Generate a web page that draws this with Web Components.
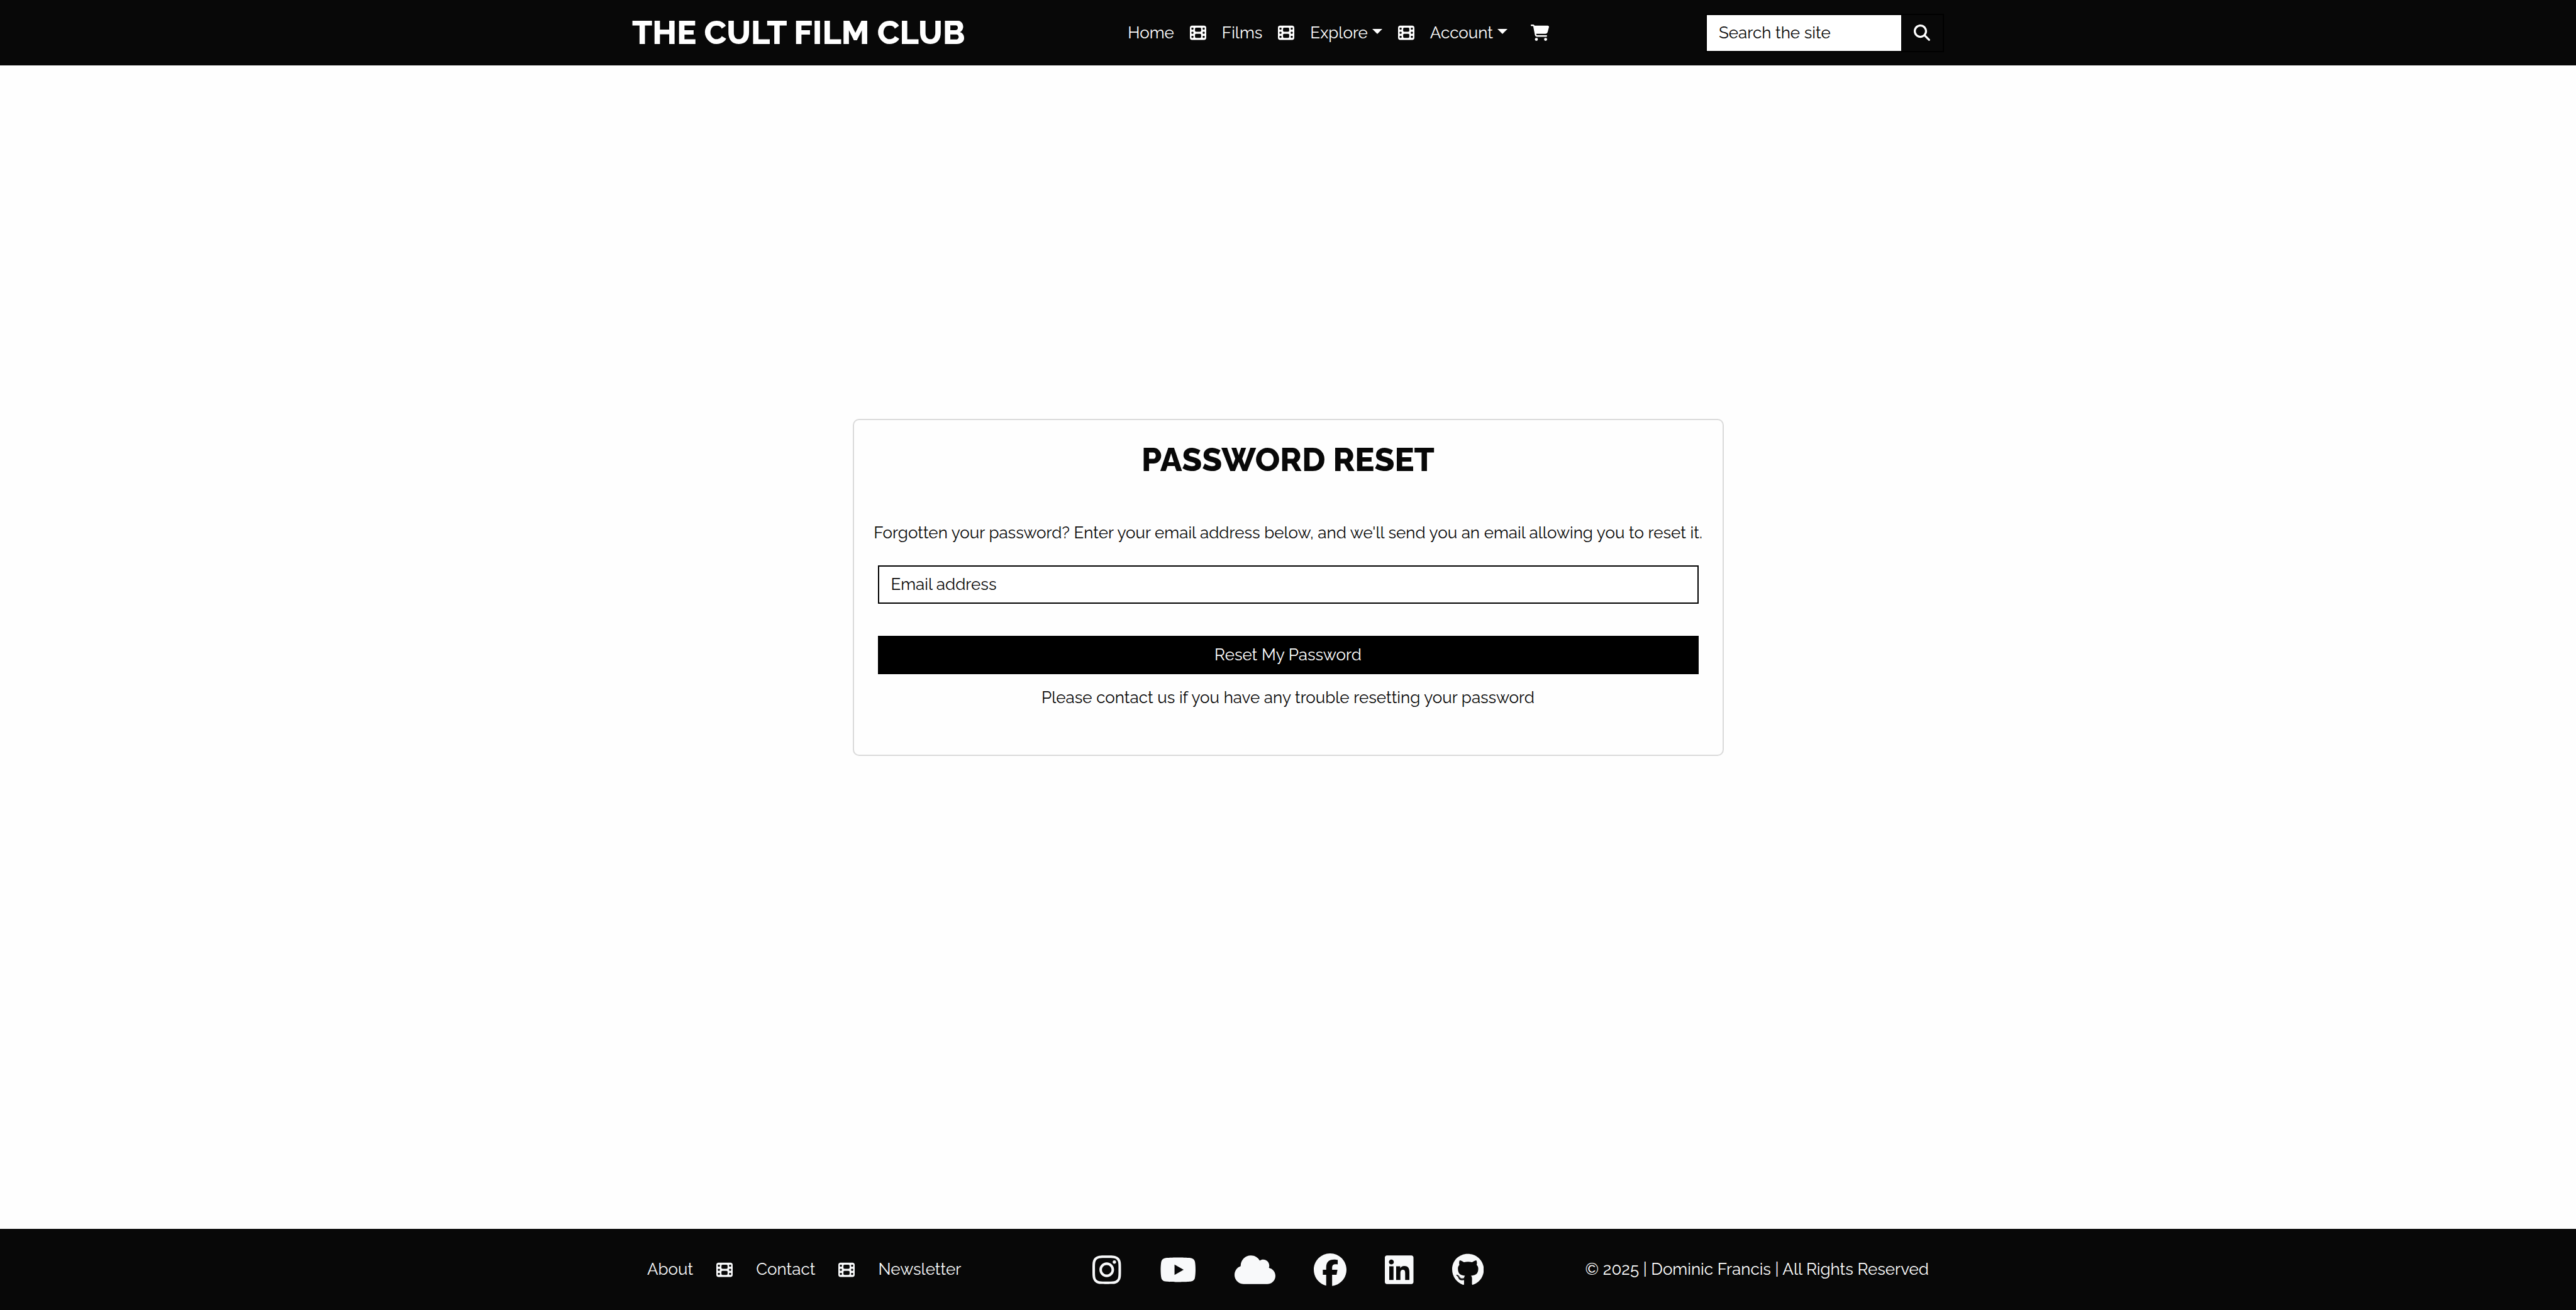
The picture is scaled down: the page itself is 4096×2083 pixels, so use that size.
<!DOCTYPE html>
<html lang="en">
<head>
<meta charset="utf-8">
<meta name="viewport" content="width=device-width, initial-scale=1">
<title>The Cult Film Club - Password Reset</title>
<style>
  html, body { margin: 0; }
  body {
    font-family: Raleway, Lato, sans-serif;
    font-size: 26px;
    line-height: 39px;
    color: #080808;
    background: #fefefe;
    --ink: #080808;
    --light: #f8f9fa;
    --container: 2086px;
  }
</style>
</head>
<body>
<film-club-page>
  <site-header slot="header"></site-header>
  <reset-card></reset-card>
  <site-footer slot="footer"></site-footer>
</film-club-page>

<script>
const ICONS = {
  film: [512, 'M0 96C0 60.7 28.7 32 64 32H448c35.3 0 64 28.7 64 64V416c0 35.3-28.7 64-64 64H64c-35.3 0-64-28.7-64-64V96zM48 368v32c0 8.8 7.2 16 16 16H96c8.8 0 16-7.2 16-16V368c0-8.8-7.2-16-16-16H64c-8.8 0-16 7.2-16 16zm368-16c-8.8 0-16 7.2-16 16v32c0 8.8 7.2 16 16 16h32c8.8 0 16-7.2 16-16V368c0-8.8-7.2-16-16-16H416zM48 240v32c0 8.8 7.2 16 16 16H96c8.8 0 16-7.2 16-16V240c0-8.8-7.2-16-16-16H64c-8.8 0-16 7.2-16 16zm368-16c-8.8 0-16 7.2-16 16v32c0 8.8 7.2 16 16 16h32c8.8 0 16-7.2 16-16V240c0-8.8-7.2-16-16-16H416zM48 112v32c0 8.8 7.2 16 16 16H96c8.8 0 16-7.2 16-16V112c0-8.8-7.2-16-16-16H64c-8.8 0-16 7.2-16 16zM416 96c-8.8 0-16 7.2-16 16v32c0 8.8 7.2 16 16 16h32c8.8 0 16-7.2 16-16V112c0-8.8-7.2-16-16-16H416zM160 128v64c0 17.7 14.3 32 32 32H320c17.7 0 32-14.3 32-32V128c0-17.7-14.3-32-32-32H192c-17.7 0-32 14.3-32 32zm32 160c-17.7 0-32 14.3-32 32v64c0 17.7 14.3 32 32 32H320c17.7 0 32-14.3 32-32V320c0-17.7-14.3-32-32-32H192z'],
  cart: [576, 'M0 24C0 10.7 10.7 0 24 0H69.5c22 0 41.5 12.8 50.6 32h411c26.3 0 45.5 25 38.6 50.4l-41 152.3c-8.5 31.4-37 53.3-69.5 53.3H170.7l5.4 28.5c2.2 11.3 12.1 19.5 23.6 19.5H488c13.3 0 24 10.7 24 24s-10.7 24-24 24H199.7c-34.6 0-64.3-24.6-70.7-58.5L77.4 54.5c-.7-3.8-4-6.5-7.9-6.5H24C10.7 48 0 37.3 0 24zM128 464a48 48 0 1 1 96 0 48 48 0 1 1 -96 0zm336-48a48 48 0 1 1 0 96 48 48 0 1 1 0-96z'],
  search: [512, 'M416 208c0 45.9-14.9 88.3-40 122.7L502.6 457.4c12.5 12.5 12.5 32.8 0 45.3s-32.8 12.5-45.3 0L330.7 376c-34.4 25.2-76.8 40-122.7 40C93.1 416 0 322.9 0 208S93.1 0 208 0S416 93.1 416 208zM208 352a144 144 0 1 0 0-288 144 144 0 1 0 0 288z'],
  instagram: [448, 'M224.1 141c-63.6 0-114.9 51.3-114.9 114.9s51.3 114.9 114.9 114.9S339 319.5 339 255.9 287.7 141 224.1 141zm0 189.6c-41.1 0-74.7-33.5-74.7-74.7s33.5-74.7 74.7-74.7 74.7 33.5 74.7 74.7-33.6 74.7-74.7 74.7zm146.4-194.3c0 14.9-12 26.8-26.8 26.8-14.9 0-26.8-12-26.8-26.8s12-26.8 26.8-26.8 26.8 12 26.8 26.8zm76.1 27.2c-1.7-35.9-9.9-67.7-36.2-93.9-26.2-26.2-58-34.4-93.9-36.2-37-2.1-147.9-2.1-184.9 0-35.8 1.7-67.6 9.9-93.9 36.1s-34.4 58-36.2 93.9c-2.1 37-2.1 147.9 0 184.9 1.7 35.9 9.9 67.7 36.2 93.9s58 34.4 93.9 36.2c37 2.1 147.9 2.1 184.9 0 35.9-1.7 67.7-9.9 93.9-36.2 26.2-26.2 34.4-58 36.2-93.9 2.1-37 2.1-147.8 0-184.8zM398.8 388c-7.8 19.6-22.9 34.7-42.6 42.6-29.5 11.7-99.5 9-132.1 9s-102.7 2.6-132.1-9c-19.6-7.8-34.7-22.9-42.6-42.6-11.7-29.5-9-99.5-9-132.1s-2.6-102.7 9-132.1c7.8-19.6 22.9-34.7 42.6-42.6 29.5-11.7 99.5-9 132.1-9s102.7-2.6 132.1 9c19.6 7.8 34.7 22.9 42.6 42.6 11.7 29.5 9 99.5 9 132.1s2.7 102.7-9 132.1z'],
  youtube: [576, 'M549.655 124.083c-6.281-23.65-24.787-42.276-48.284-48.597C458.781 64 288 64 288 64S117.22 64 74.629 75.486c-23.497 6.322-42.003 24.947-48.284 48.597-11.412 42.867-11.412 132.305-11.412 132.305s0 89.438 11.412 132.305c6.281 23.65 24.787 41.5 48.284 47.821C117.22 448 288 448 288 448s170.78 0 213.371-11.486c23.497-6.321 42.003-24.171 48.284-47.821 11.412-42.867 11.412-132.305 11.412-132.305s0-89.438-11.412-132.305zm-317.51 213.508V175.185l142.739 81.205-142.739 81.201z'],
  cloud: [640, 'M0 336c0 79.5 64.5 144 144 144H512c70.7 0 128-57.3 128-128c0-61.9-44-113.6-102.4-125.4c4.1-10.7 6.4-22.4 6.4-34.6c0-53-43-96-96-96c-19.7 0-38.1 6-53.3 16.2C367 64.2 315.3 32 256 32C167.6 32 96 103.6 96 192c0 2.7 .1 5.4 .2 8.1C40.2 219.8 0 273.2 0 336z'],
  facebook: [512, 'M512 256C512 114.6 397.4 0 256 0S0 114.6 0 256C0 376 82.7 476.8 194.2 504.5V334.2H141.4V256h52.8V222.3c0-87.1 39.4-127.5 125-127.5c16.2 0 44.2 3.2 55.7 6.4V172c-6-.6-16.5-1-29.6-1c-42 0-58.2 15.9-58.2 57.2V256h83.6l-14.4 78.2H287V510.1C413.8 494.8 512 386.9 512 256h0z'],
  linkedin: [448, 'M416 32H31.9C14.3 32 0 46.5 0 64.3v383.4C0 465.5 14.3 480 31.9 480H416c17.6 0 32-14.5 32-32.3V64.3c0-17.8-14.4-32.3-32-32.3zM135.4 416H69V202.2h66.5V416zm-33.2-243c-21.3 0-38.5-17.3-38.5-38.5S80.9 96 102.2 96c21.2 0 38.5 17.3 38.5 38.5 0 21.3-17.2 38.5-38.5 38.5zm282.1 243h-66.4V312c0-24.8-.5-56.7-34.5-56.7-34.6 0-39.9 27-39.9 54.9V416h-66.4V202.2h63.7v29.2h.9c8.9-16.8 30.6-34.5 62.9-34.5 67.2 0 79.7 44.3 79.7 101.9V416z'],
  github: [496, 'M165.9 397.4c0 2-2.3 3.6-5.2 3.6-3.3.3-5.6-1.3-5.6-3.6 0-2 2.3-3.6 5.2-3.6 3-.3 5.6 1.3 5.6 3.6zm-31.1-4.5c-.7 2 1.3 4.3 4.3 4.9 2.6 1 5.6 0 6.2-2s-1.3-4.3-4.3-5.2c-2.6-.7-5.5.3-6.2 2.3zm44.2-1.7c-2.9.7-4.9 2.6-4.6 4.9.3 2 2.9 3.3 5.9 2.6 2.9-.7 4.9-2.6 4.6-4.6-.3-1.9-3-3.2-5.9-2.9zM244.8 8C106.1 8 0 113.3 0 252c0 110.9 69.8 205.8 169.5 239.2 12.8 2.3 17.3-5.6 17.3-12.1 0-6.2-.3-40.4-.3-61.4 0 0-70 15-84.7-29.8 0 0-11.4-29.1-27.8-36.6 0 0-22.9-15.7 1.6-15.4 0 0 24.9 2 38.6 25.8 21.9 38.6 58.6 27.5 72.9 20.9 2.3-16 8.8-27.1 16-33.7-55.9-6.2-112.3-14.3-112.3-110.5 0-27.5 7.6-41.3 23.6-58.9-2.6-6.5-11.1-33.3 2.6-67.9 20.9-6.5 69 27 69 27 20-5.6 41.5-8.5 62.8-8.5s42.8 2.9 62.8 8.5c0 0 48.1-33.6 69-27 13.7 34.7 5.2 61.4 2.6 67.9 16 17.7 25.8 31.5 25.8 58.9 0 96.5-58.9 104.2-114.8 110.5 9.2 7.9 17 22.9 17 46.4 0 33.7-.3 75.4-.3 83.6 0 6.5 4.6 14.4 17.3 12.1C428.2 457.8 496 362.9 496 252 496 113.3 383.5 8 244.8 8zM97.2 352.9c-1.3 1-1 3.3.7 5.2 1.6 1.6 3.9 2.3 5.2 1 1.3-1 1-3.3-.7-5.2-1.6-1.6-3.9-2.3-5.2-1zm-10.8-8.1c-.7 1.3.3 2.9 2.3 3.9 1.6 1 3.6.7 4.3-.7.7-1.3-.3-2.9-2.3-3.9-2-.6-3.6-.3-4.3.7zm32.4 35.6c-1.6 1.3-1 4.3 1.3 6.2 2.3 2.3 5.2 2.6 6.5 1 1.3-1.3.7-4.3-1.3-6.2-2.2-2.3-5.2-2.6-6.5-1zm-11.4-14.7c-1.6 1-1.6 3.6 0 5.9 1.6 2.3 4.3 3.3 5.6 2.3 1.6-1.3 1.6-3.9 0-6.2-1.4-2.3-4-3.3-5.6-2z']
};

function define(name, html) {
  const template = document.createElement('template');
  template.innerHTML = html;
  customElements.define(name, class extends HTMLElement {
    constructor() {
      super();
      this.attachShadow({ mode: 'open' }).append(template.content.cloneNode(true));
    }
  });
}

/* <fa-icon name="film">: a glyph one --size high, as wide as its own view box */
customElements.define('fa-icon', class extends HTMLElement {
  connectedCallback() {
    if (this.shadowRoot) return;
    const [width, path] = ICONS[this.getAttribute('name')];
    this.attachShadow({ mode: 'open' }).innerHTML = `
      <style>
        :host { display: block; flex: none; }
        svg { display: block; height: var(--size, 26px); width: auto; fill: currentColor; }
      </style>
      <svg viewBox="0 0 ${width} 512" aria-hidden="true"><path d="${path}"/></svg>`;
  }
});

define('nav-link', `
  <style>
    :host { display: block; }
    a { color: inherit; text-decoration: none; white-space: nowrap; }
    .caret { display: none; margin-left: 7px; vertical-align: 7px;
      border: 8px solid transparent; border-top-color: currentColor; border-bottom: 0; }
    :host([menu]) .caret { display: inline-block; }
  </style>
  <a href="#"><slot></slot><span class="caret"></span></a>`);

define('search-box', `
  <style>
    :host { display: block; }
    form { display: flex; border: 2px solid #000; }
    input { box-sizing: border-box; width: 309px; height: 57px; margin: 0; padding: 0 19px; border: 0;
      border-radius: 0; background: #fff; color: var(--ink); font: inherit; }
    input::placeholder { color: var(--ink); opacity: 1; }
    button { display: flex; align-items: center; padding: 0 20px; border: 0; margin: 0;
      background: var(--ink); color: #fff; }
  </style>
  <form>
    <input type="text" aria-label="Search the site" placeholder="Search the site">
    <button type="button" aria-label="Search"><fa-icon name="search"></fa-icon></button>
  </form>`);

define('site-header', `
  <style>
    :host { display: block; background: var(--ink); color: #fff; }
    .bar { display: flex; align-items: center; justify-content: space-between;
      max-width: var(--container); height: 104px; margin: 0 auto; }
    .brand { color: inherit; text-decoration: none; font-size: 52px; line-height: 62px; font-weight: 800; }
    nav { display: flex; align-items: center; gap: 25px; padding-left: 10px; }
    .cart { color: inherit; padding-left: 12px; }
  </style>
  <div class="bar">
    <a class="brand" href="#">THE CULT FILM CLUB</a>
    <nav>
      <nav-link>Home</nav-link>
      <fa-icon name="film"></fa-icon>
      <nav-link>Films</nav-link>
      <fa-icon name="film"></fa-icon>
      <nav-link menu>Explore</nav-link>
      <fa-icon name="film"></fa-icon>
      <nav-link menu>Account</nav-link>
      <a class="cart" href="#" aria-label="Cart"><fa-icon name="cart"></fa-icon></a>
    </nav>
    <search-box></search-box>
  </div>`);

define('reset-card', `
  <style>
    :host { display: block; box-sizing: border-box; width: 1385px; max-width: 100%;
      padding: 32px 38px 71px; border: 2px solid #dadada; border-radius: 10px; text-align: center; }
    h1 { margin: 0 0 66px; font-size: 52px; line-height: 62px; font-weight: 800; }
    p { margin: 0; }
    .intro { margin: 0 -10px 32px; white-space: nowrap; }
    form { display: flex; flex-direction: column; gap: 51px; margin-bottom: 18px; }
    input, button { box-sizing: border-box; width: 100%; height: 61px; margin: 0; border: 2px solid #000;
      border-radius: 0; font: inherit; }
    input { padding: 0 19px; background: #fff; color: var(--ink); }
    input::placeholder { color: var(--ink); opacity: 1; }
    button { background: #000; color: #fff; }
    a { color: inherit; text-decoration: none; }
  </style>
  <h1>PASSWORD RESET</h1>
  <p class="intro">Forgotten your password? Enter your email address below, and we'll send you an email allowing you to reset it.</p>
  <form>
    <input type="email" aria-label="Email address" placeholder="Email address">
    <button type="button">Reset My Password</button>
  </form>
  <p>Please <a href="#">contact us</a> if you have any trouble resetting your password</p>`);

define('social-links', `
  <style>
    :host { display: flex; align-items: center; gap: 61px; --size: 52px; }
    a { color: inherit; }
  </style>
  <a href="#" aria-label="Instagram"><fa-icon name="instagram"></fa-icon></a>
  <a href="#" aria-label="YouTube"><fa-icon name="youtube"></fa-icon></a>
  <a href="#" aria-label="Bluesky"><fa-icon name="cloud"></fa-icon></a>
  <a href="#" aria-label="Facebook"><fa-icon name="facebook"></fa-icon></a>
  <a href="#" aria-label="LinkedIn"><fa-icon name="linkedin"></fa-icon></a>
  <a href="#" aria-label="GitHub"><fa-icon name="github"></fa-icon></a>`);

define('site-footer', `
  <style>
    :host { display: block; background: var(--ink); color: var(--light); }
    .bar { display: grid; grid-template-columns: 1fr auto 1fr; align-items: center; box-sizing: border-box;
      max-width: var(--container); height: 129px; margin: 0 auto; padding: 0 24px; }
    nav { display: flex; align-items: center; gap: 37px; }
    p { margin: 0; text-align: right; color: #fff; }
  </style>
  <div class="bar">
    <nav>
      <nav-link>About</nav-link>
      <fa-icon name="film"></fa-icon>
      <nav-link>Contact</nav-link>
      <fa-icon name="film"></fa-icon>
      <nav-link>Newsletter</nav-link>
    </nav>
    <social-links></social-links>
    <p>© 2025 | Dominic Francis | All Rights Reserved</p>
  </div>`);

define('film-club-page', `
  <style>
    :host { display: flex; flex-direction: column; min-height: 100vh; }
    main { flex: 1; display: grid; grid-template-rows: 56fr auto 75fr; justify-items: center; }
    main slot { display: block; grid-row: 2; max-width: 100%; }
  </style>
  <slot name="header"></slot>
  <main><slot></slot></main>
  <slot name="footer"></slot>`);
</script>
</body>
</html>
